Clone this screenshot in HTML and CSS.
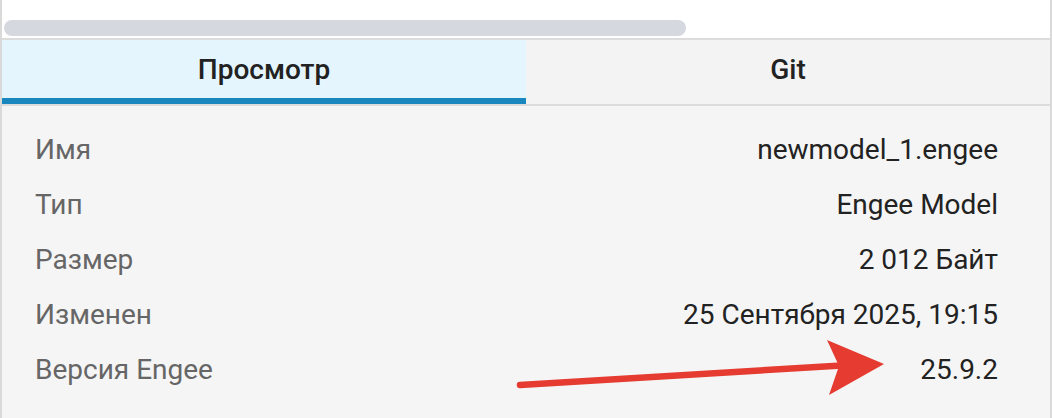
FILE: index.html
```html
<!DOCTYPE html>
<html lang="ru">
<head>
<meta charset="utf-8">
<link rel="stylesheet" href="styles.css">
</head>
<body>
<div class="panel">
  <div class="scroll-area">
    <div class="scroll-thumb"></div>
  </div>
  <div class="tabs">
    <div class="tab active">Просмотр</div>
    <div class="tab">Git</div>
  </div>
  <div class="props">
    <div class="row"><span class="label">Имя</span><span class="value">newmodel_1.engee</span></div>
    <div class="row"><span class="label">Тип</span><span class="value">Engee Model</span></div>
    <div class="row"><span class="label">Размер</span><span class="value">2 012 Байт</span></div>
    <div class="row"><span class="label">Изменен</span><span class="value">25 Сентября 2025, 19:15</span></div>
    <div class="row"><span class="label">Версия Engee</span><span class="value">25.9.2</span></div>
    <svg class="arrow" width="400" height="70" viewBox="500 335 400 70" xmlns="http://www.w3.org/2000/svg">
      <line x1="520" y1="385" x2="850" y2="365" stroke="#e53b30" stroke-width="6.5" stroke-linecap="round"/>
      <polygon points="827,340 884,364 829,395 839,366" fill="#e53b30"/>
    </svg>
  </div>
</div>
</body>
</html>
```

FILE: styles.css
```css
html, body {
  margin: 0;
  padding: 0;
  background: #ffffff;
}

body {
  font-family: Roboto, "Liberation Sans", sans-serif;
  width: 1052px;
  height: 418px;
  overflow: hidden;
}

.panel {
  position: relative;
  box-sizing: border-box;
  width: 1052px;
  height: 418px;
  border-left: 2px solid #d9d9d9;
  border-right: 2px solid #d9d9d9;
  display: flex;
  flex-direction: column;
}

.scroll-area {
  box-sizing: border-box;
  height: 40px;
  padding: 20px 0 0 2px;
  background: #ffffff;
  border-bottom: 2px solid #dcdcdc;
}

.scroll-thumb {
  width: 682px;
  height: 16px;
  border-radius: 8px;
  background: #d5d8df;
}

.tabs {
  display: flex;
  height: 66px;
  box-sizing: border-box;
  border-bottom: 2px solid #dcdcdc;
  background: #f3f3f3;
}

.tab {
  flex: 1;
  display: flex;
  align-items: center;
  justify-content: center;
  font-size: 28px;
  font-weight: 500;
  color: #222222;
  box-sizing: border-box;
  padding-bottom: 6px;
}

.tab.active {
  background: #e4f5fd;
  border-bottom: 6px solid #1a86be;
  padding-bottom: 0;
}

.props {
  position: relative;
  flex: 1;
  background: #f5f5f5;
  padding: 16px 52px 0 33px;
}

.row {
  display: flex;
  justify-content: space-between;
  align-items: center;
  height: 55px;
  font-size: 28px;
}

.label {
  color: #666666;
}

.value {
  color: #222222;
}

.arrow {
  position: absolute;
  left: 498px;
  top: 229px;
}
```
